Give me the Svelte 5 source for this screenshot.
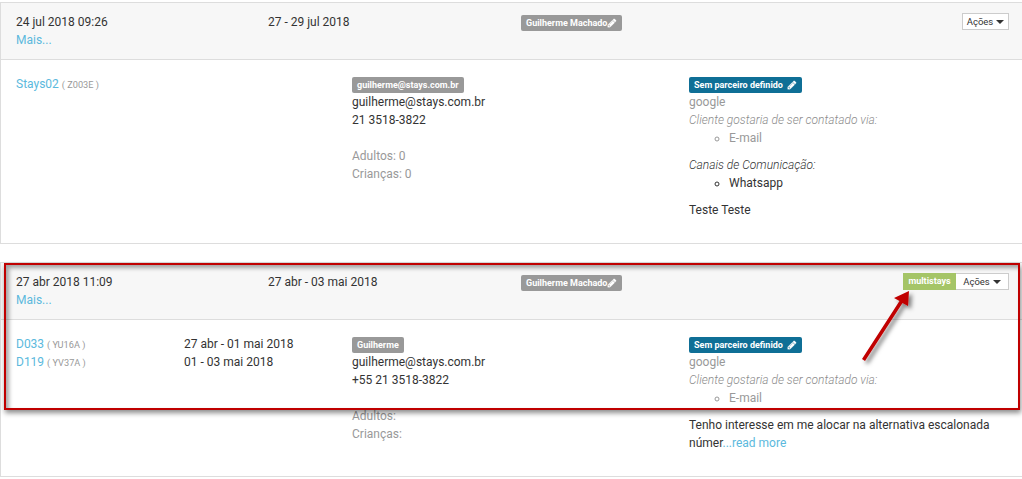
<script>
  const pencil =
    'M491 1536l91-91-235-235-91 91v107h128v128h107zm523-928q0-22-22-22-10 0-17 7l-542 542q-7 7-7 17 0 22 22 22 10 0 17-7l542-542q7-7 7-17zm-54-192l416 416-832 832H128V1248zm683 96q0 53-37 90l-166 166-416-416 166-165q36-38 90-38 53 0 91 38l235 234q37 39 37 91z';
</script>

{#snippet pen()}
  <svg class="pen" viewBox="0 0 1792 1792" aria-hidden="true"><path d={pencil} /></svg>
{/snippet}

<div class="page">
  <section class="card">
    <header class="card-head">
      <div>
        <div>24 jul 2018 09:26</div>
        <a href="#mais">Mais...</a>
      </div>
      <div>27 - 29 jul 2018</div>
      <div><span class="label">Guilherme Machado{@render pen()}</span></div>
      <div class="actions">
        <button type="button" class="btn">Ações <i class="caret"></i></button>
      </div>
    </header>
    <div class="card-body">
      <div class="col-units">
        <div><a href="#s">Stays02</a> <small>( Z003E )</small></div>
      </div>
      <div class="col-guest">
        <span class="label">guilherme@stays.com.br</span>
        <div>guilherme@stays.com.br</div>
        <div>21 3518-3822</div>
        <div class="counts muted">
          <div>Adultos: 0</div>
          <div>Crianças: 0</div>
        </div>
      </div>
      <div class="col-partner">
        <span class="label partner">Sem parceiro definido{@render pen()}</span>
        <div class="muted">google</div>
        <em class="muted">Cliente gostaria de ser contatado via:</em>
        <ul class="muted"><li>E-mail</li></ul>
        <em>Canais de Comunicação:</em>
        <ul><li>Whatsapp</li></ul>
        <p>Teste Teste</p>
      </div>
    </div>
  </section>

  <section class="card">
    <header class="card-head">
      <div>
        <div>27 abr 2018 11:09</div>
        <a href="#mais">Mais...</a>
      </div>
      <div>27 abr - 03 mai 2018</div>
      <div><span class="label">Guilherme Machado{@render pen()}</span></div>
      <div class="actions">
        <span class="origin">multistays</span>
        <button type="button" class="btn joined">Ações <i class="caret"></i></button>
      </div>
    </header>
    <div class="card-body">
      <div class="col-units">
        <div><a href="#d">D033</a> <small>( YU16A )</small></div>
        <div><a href="#d">D119</a> <small>( YV37A )</small></div>
      </div>
      <div class="col-dates">
        <div>27 abr - 01 mai 2018</div>
        <div>01 - 03 mai 2018</div>
      </div>
      <div class="col-guest">
        <span class="label">Guilherme</span>
        <div>guilherme@stays.com.br</div>
        <div>+55 21 3518-3822</div>
        <div class="counts muted">
          <div>Adultos:</div>
          <div>Crianças:</div>
        </div>
      </div>
      <div class="col-partner">
        <span class="label partner">Sem parceiro definido{@render pen()}</span>
        <div class="muted">google</div>
        <em class="muted soft">Cliente gostaria de ser contatado via:</em>
        <ul class="muted"><li>E-mail</li></ul>
        <p>Tenho interesse em me alocar na alternativa escalonada<br />númer<a href="#more">...read more</a></p>
      </div>
    </div>
  </section>

  <!-- marcacao por cima da captura -->
  <div class="highlight"></div>
  <svg class="arrow" viewBox="0 0 70 90" aria-hidden="true">
    <defs>
      <filter id="soft" x="-30%" y="-30%" width="160%" height="160%">
        <feDropShadow dx="3" dy="3" stdDeviation="2.2" flood-color="#000" flood-opacity="0.5" />
      </filter>
    </defs>
    <path filter="url(#soft)" fill="#c00000" d="M6 72 L43.5 14 L38 11 L53 4 L52 19 L46.5 16 L9 74 Z" />
  </svg>
</div>

<style>
  :global(html),
  :global(body) {
    overflow: hidden;
  }

  .page {
    position: relative;
    height: 479px;
    padding-top: 2px;
    box-sizing: border-box;
    background: #fff;
    color: #333;
    font: 12px/18px Roboto, sans-serif;
  }

  .card {
    border: 1px solid #ddd;
    border-right: 0;
    margin-bottom: 18px;
  }

  .card-head {
    display: grid;
    grid-template-columns: 252px 253px 1fr auto;
    height: 57px;
    padding: 10px 13px 0 15px;
    box-sizing: border-box;
    background: #f7f7f7;
    border-bottom: 1px solid #ddd;
  }

  .card-body {
    display: grid;
    grid-template-columns: 168px 168px 337px 1fr;
    padding: 15px 15px 24px;
  }

  .col-units {
    grid-column: 1;
  }

  .col-dates {
    grid-column: 2;
  }

  .col-guest {
    grid-column: 3;
  }

  .col-partner {
    grid-column: 4;
  }

  a {
    color: #5bb9dd;
    text-decoration: none;
  }

  small {
    font-size: 9.2px;
    line-height: 1;
    color: #999;
  }

  em {
    display: block;
    font-style: italic;
    font-weight: 300;
  }

  em.muted {
    color: #8c8c8c;
  }

  ul {
    margin: 0 0 9px;
    padding-left: 40px;
    list-style: circle;
  }

  p {
    margin: 0;
  }

  .muted {
    color: #999;
  }

  .counts {
    margin-top: 18px;
  }

  .label {
    display: block;
    width: max-content;
    height: 16px;
    margin-top: 2px;
    padding: 0 5px;
    border-radius: 2px;
    background: #999;
    color: #fff;
    font-size: 9px;
    font-weight: 700;
    line-height: 16px;
    box-sizing: border-box;
  }

  .partner {
    background: #0f6f96;
  }

  .partner .pen {
    margin-left: 4px;
  }

  .pen {
    width: 10px;
    height: 10px;
    fill: currentColor;
    stroke: currentColor;
    stroke-width: 40;
    vertical-align: -2px;
  }

  .actions {
    display: flex;
    align-items: flex-start;
  }

  .btn {
    display: flex;
    align-items: center;
    justify-content: center;
    gap: 3px;
    width: 47px;
    height: 17px;
    padding: 0;
    border: 1px solid #ccc;
    background: #fff;
    color: #333;
    font: 9.5px/15px Roboto, sans-serif;
  }

  .caret {
    width: 0;
    height: 0;
    border: 4px solid transparent;
    border-top-color: #333;
    border-bottom: 0;
  }

  .joined {
    width: 53px;
    border-left: 0;
  }

  .origin {
    width: 53px;
    height: 17px;
    background: #a5c567;
    color: #fff;
    font-size: 9px;
    font-weight: 700;
    line-height: 17px;
    text-align: center;
  }

  .highlight {
    position: absolute;
    left: 4px;
    top: 263px;
    width: 1016px;
    height: 147px;
    box-sizing: border-box;
    border: 2px solid #c00000;
    box-shadow: 1px 3px 5px rgba(0, 0, 0, 0.45), inset 3px 3px 4px rgba(0, 0, 0, 0.35);
    pointer-events: none;
  }

  .arrow {
    position: absolute;
    left: 856px;
    top: 287px;
    width: 70px;
    height: 90px;
    overflow: visible;
  }
</style>
